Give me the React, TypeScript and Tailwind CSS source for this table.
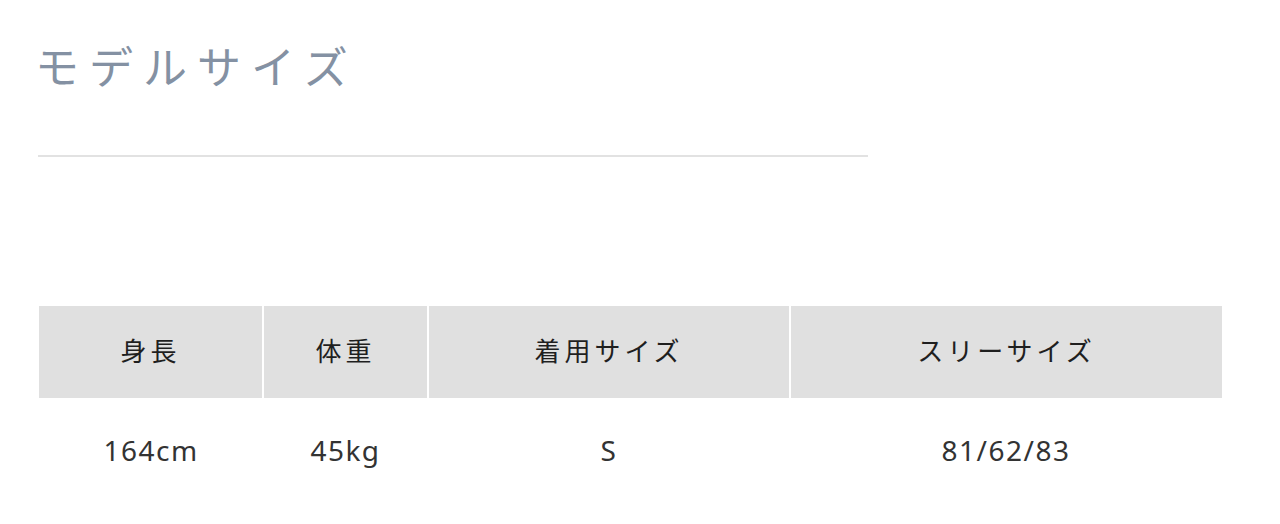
const heads = ["身長", "体重", "着用サイズ", "スリーサイズ"];
const vals = ["164cm", "45kg", "S", "81/62/83"];
const widths = ["w-[224px]", "w-[165px]", "w-[362px]", "w-[432px]"];

export default function App() {
  return (
    <div className="h-[524px] w-[1280px] bg-white pl-[38px] pt-[43px] font-['Noto_Sans','Noto_Sans_CJK_JP',sans-serif]">
      <h2 className="-ml-[3px] text-[44px] leading-[44px] tracking-[10px] text-[#8491a3] font-['Noto_Sans_CJK_JP',sans-serif] font-normal">
        モデルサイズ
      </h2>
      <div className="mt-[68px] h-[2px] w-[830px] bg-[#e2e2e2]" />
      <table className="ml-[1px] mt-[149px] border-collapse">
        <thead>
          <tr>
            {heads.map((h, i) => (
              <th
                key={h}
                className={`${widths[i]} h-[92px] border-l-2 border-white bg-[#e0e0e0] p-0 pb-[5px] text-center text-[26px] font-normal tracking-[4px] text-[#1f1f1f] first:border-l-0 font-['Noto_Sans_CJK_JP',sans-serif]`}
              >
                {h}
              </th>
            ))}
          </tr>
        </thead>
        <tbody>
          <tr>
            {vals.map((v) => (
              <td key={v} className="h-[104px] p-0 text-center text-[28px] tracking-[1.5px] text-[#333]">
                {v}
              </td>
            ))}
          </tr>
        </tbody>
      </table>
    </div>
  );
}
